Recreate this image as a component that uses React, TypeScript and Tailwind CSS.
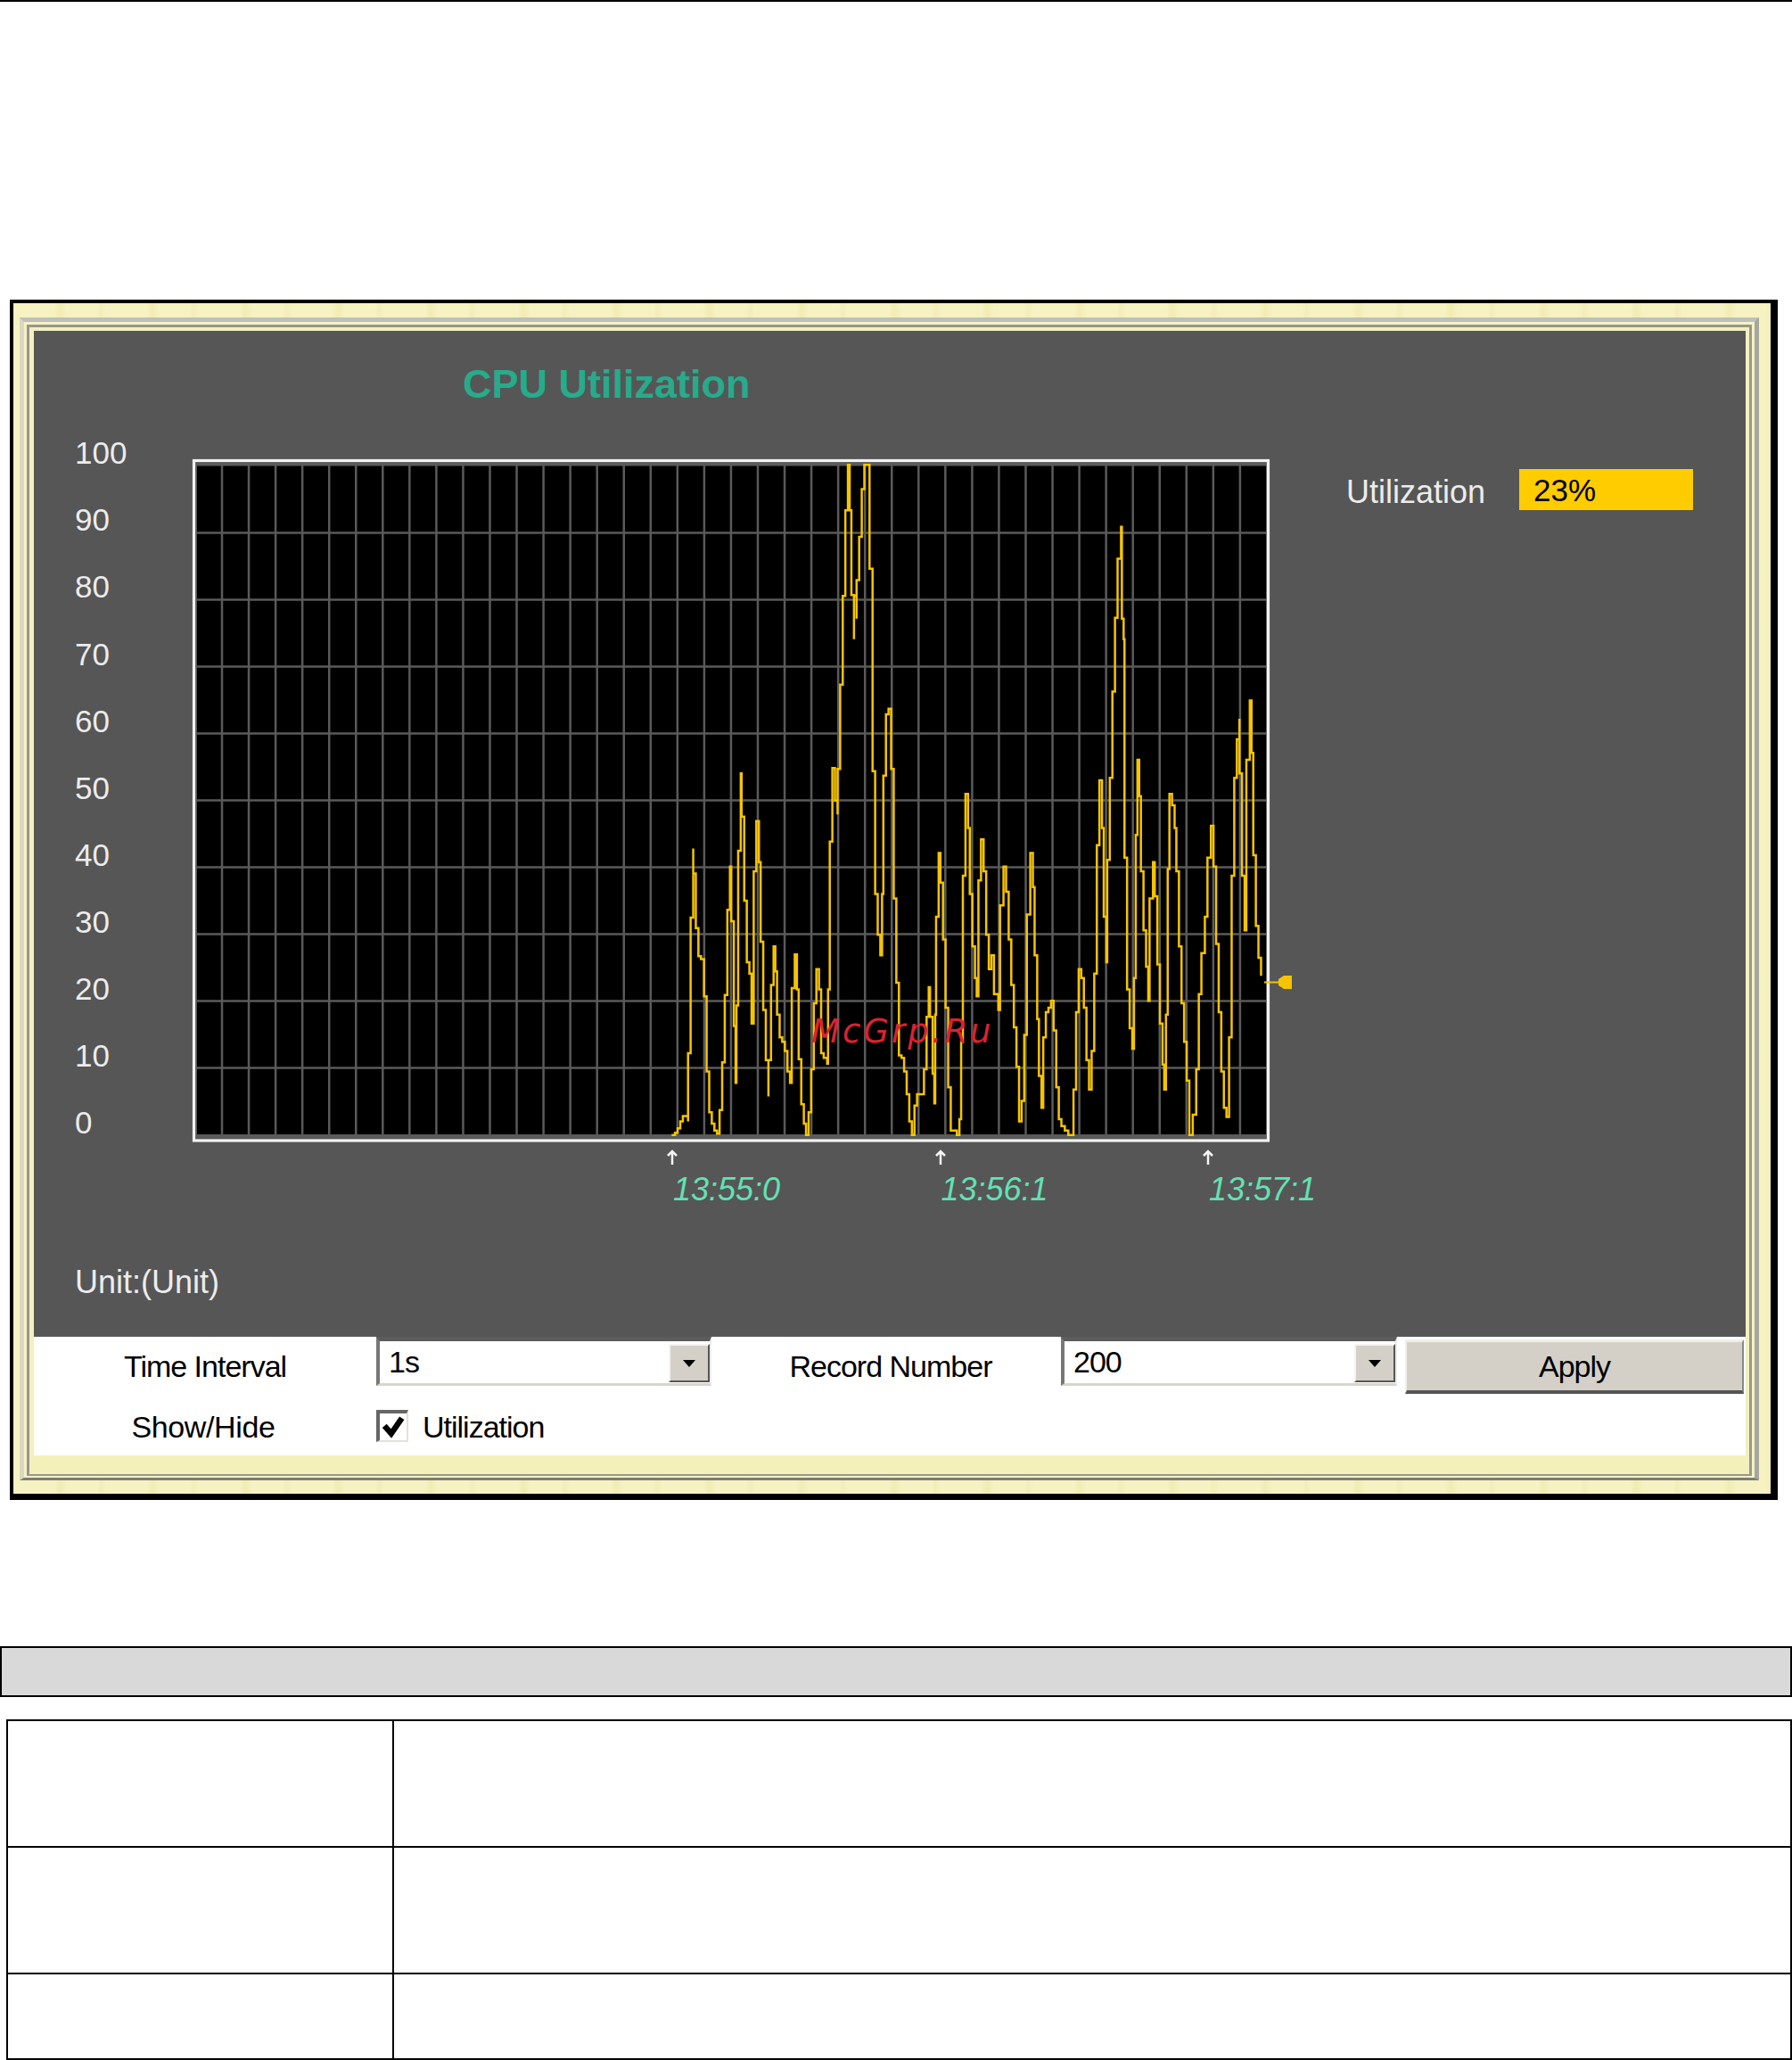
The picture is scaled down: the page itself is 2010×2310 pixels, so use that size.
const yLabels = ["100", "90", "80", "70", "60", "50", "40", "30", "20", "10", "0"];
const ticks = ["13:55:0", "13:56:1", "13:57:1"];

// x, y of each step of the trace, read off the chart
const trace = [
  [118,1550],[124,1540],[130,1525],[136,1513],[148,1525],[148,1375],[154,1077],[160,925],[160,980],[166,1100],[172,1162],[178,1168],[185,1250],[191,1415],[197,1505],[203,1530],[209,1545],[215,1552],[221,1500],[227,1395],[233,1247],[239,1060],[245,965],[248,1085],[254,1315],[258,1440],[260,1270],[264,930],[270,760],[272,855],[278,1040],[284,1175],[290,1200],[295,1310],[300,975],[306,865],[312,955],[316,1130],[322,1280],[328,1390],[334,1470],[334,1390],[340,1225],[346,1140],[350,1195],[354,1290],[360,1340],[366,1350],[372,1370],[378,1415],[384,1440],[388,1232],[395,1158],[400,1235],[404,1388],[410,1487],[416,1530],[421,1555],[427,1505],[433,1410],[439,1265],[445,1190],[451,1235],[456,1375],[462,1385],[470,1398],[472,1235],[476,910],[482,748],[488,820],[494,850],[494,750],[500,565],[506,370],[512,182],[518,82],[522,182],[526,368],[532,465],[532,370],[538,420],[538,335],[544,240],[550,135],[556,82],[568,82],[568,310],[575,755],[581,1025],[587,1115],[593,1160],[597,1025],[600,765],[606,630],[612,618],[618,750],[624,1035],[630,1220],[636,1380],[642,1385],[648,1415],[654,1465],[660,1525],[666,1555],[672,1490],[678,1465],[690,1465],[694,1410],[700,1295],[705,1230],[708,1295],[714,1420],[718,1485],[720,1290],[722,1075],[728,935],[732,1000],[738,1125],[744,1275],[750,1450],[756,1545],[762,1545],[770,1555],[776,1520],[780,1350],[784,985],[790,805],[796,880],[800,1025],[806,1140],[812,1210],[816,1250],[820,995],[826,905],[832,975],[838,1115],[844,1190],[850,1160],[856,1245],[866,1280],[870,1050],[878,965],[884,1020],[890,1125],[896,1225],[902,1318],[908,1405],[914,1525],[920,1480],[926,1335],[932,1070],[940,935],[946,1010],[950,1160],[956,1300],[960,1425],[966,1495],[970,1340],[976,1285],[982,1275],[988,1260],[994,1325],[1000,1450],[1006,1520],[1012,1535],[1020,1545],[1028,1555],[1040,1455],[1046,1285],[1052,1190],[1058,1210],[1064,1275],[1070,1390],[1076,1455],[1082,1370],[1088,1200],[1094,918],[1100,775],[1106,880],[1110,1075],[1116,1175],[1118,950],[1124,770],[1130,580],[1136,418],[1142,288],[1150,218],[1152,420],[1156,465],[1158,945],[1164,1235],[1170,1320],[1176,1365],[1180,1210],[1184,895],[1188,730],[1192,810],[1196,975],[1202,1105],[1208,1185],[1213,1260],[1216,1035],[1224,955],[1228,1030],[1234,1180],[1240,1310],[1246,1400],[1250,1455],[1254,1290],[1258,970],[1262,805],[1268,830],[1274,880],[1278,975],[1284,1140],[1290,1265],[1296,1350],[1302,1435],[1308,1555],[1316,1510],[1324,1410],[1330,1245],[1336,1155],[1344,1075],[1350,945],[1358,875],[1364,965],[1370,1135],[1376,1285],[1382,1415],[1388,1495],[1394,1515],[1400,1340],[1406,985],[1412,770],[1418,685],[1424,640],[1424,760],[1430,985],[1436,1105],[1440,730],[1448,600],[1452,715],[1456,940],[1462,1095],[1468,1165],[1474,1205],
];
const tracePath = "M110 1555" + trace.map(([x, y]) => `H${x}V${y}`).join("");

function Plot() {
  return (
    <svg width="1208" height="766" className="block overflow-visible">
      <rect x="1.5" y="1.5" width="1205" height="762.5" fill="#5a5a5a" stroke="#f2f2f2" strokeWidth="3.2" />
      <rect x="5" y="7.5" width="1199" height="749.5" fill="#000" />
      {Array.from({ length: 39 }, (_, i) => (
        <line key={i} x1={33 + i * 30.05} x2={33 + i * 30.05} y1="7" y2="758" stroke="#5a5a5a" strokeWidth="2.5" />
      ))}
      {Array.from({ length: 9 }, (_, i) => (
        <line key={i} x1="5" x2="1204" y1={82.5 + i * 75} y2={82.5 + i * 75} stroke="#5a5a5a" strokeWidth="2.5" />
      ))}
      <g transform="translate(484 -35.5) scale(0.4847 0.5102)">
        <path d={tracePath} fill="none" stroke="#f5c400" strokeWidth="2.5" vectorEffect="non-scaling-stroke" />
      </g>
      <path d="M1202 586.5H1218" stroke="#f5c400" strokeWidth="2" />
      <path d="M1218 583l6-4h9v15h-9l-6-4z" fill="#f5c400" />
    </svg>
  );
}

function ArrowTick() {
  return (
    <svg width="16" height="18" viewBox="0 0 16 18" className="block">
      <path d="M8 17V2M3 7l5-5 5 5" fill="none" stroke="#f4f4f4" strokeWidth="2.5" />
    </svg>
  );
}

function Select({ value, className }: { value: React.ReactNode; className: string }) {
  return (
    <div className={`flex h-[55px] border-t-[5px] border-r-2 border-b-[3px] border-l-[4px] border-t-[#5c5c5c] border-r-[#ececec] border-b-[#d8d5cc] border-l-[#777] bg-white ${className}`}>
      <div className="flex flex-1 items-center pl-[10px]">{value}</div>
      <div className="mt-[3px] flex h-[43px] w-[46px] items-center justify-center border-2 border-t-[#f4f4f4] border-r-[#555] border-b-[#555] border-l-[#f4f4f4] bg-[#d4d0c8]">
        <div className="h-0 w-0 border-x-[7px] border-t-[8px] border-x-transparent border-t-black" />
      </div>
    </div>
  );
}

export default function App() {
  return (
    <div className="relative h-[2310px] w-[2010px] overflow-hidden bg-white font-['Liberation_Sans',sans-serif]">
      <div className="h-[2px] bg-black" />

      <div className="mt-[334px] ml-[11px] w-[1983px] border-t-4 border-r-8 border-b-[7px] border-l-4 border-black bg-[#f6f2c2] bg-[repeating-linear-gradient(90deg,#f6f2c2_0px,#f6f2c2_46px,#f1ecb2_52px,#f6f2c2_60px,#f6f2c2_94px,#f2edb8_98px,#f6f2c2_104px)] pt-4 pr-[13px] pb-[15px] pl-[7px]">
        <div className="border-[5px] border-t-[#bfbfba] border-r-[#a6a6a0] border-b-[3px] border-b-[#7c7c78] border-l-[#d8d8c4]">
          <div className="border-[3px] border-b-2 border-[#f6f2c2]">
            <div className="border-[3px] border-b-2 border-[#97978f]">
              <div className="border-t-[4px] border-r-[4px] border-b-[21px] border-l-[5px] border-t-[#f3efc0] border-r-[#f3efc0] border-b-[#f4f0ba] border-l-[#f3efc0]">
                {/* dark chart panel */}
                <div className="flex h-[1128px] flex-col bg-[#565656] text-[#ececec]">
                  <div className="h-[84px] pt-[35px] pl-[481px] text-[45px] leading-[50px] font-bold text-[#27ab8b]">CPU Utilization</div>
                  <div className="flex items-start">
                    <div className="ml-[46px] w-[132px] shrink-0 pt-[16px] text-[35px]">
                      {yLabels.map((label) => (
                        <div key={label} className="flex h-[75.1px] items-center">{label}</div>
                      ))}
                    </div>
                    <div className="relative mt-[60px] w-[1208px] shrink-0">
                      <Plot />
                      <div className="absolute top-[620px] left-[694px] font-['DejaVu_Sans',sans-serif] text-[37px] leading-[44px] tracking-[3px] whitespace-nowrap text-[#dc2231] italic">McGrp.Ru</div>
                      <div className="ml-[530px] flex w-max pt-[8px] text-[36px] leading-[42px] text-[#62e2b4] italic">
                        {ticks.map((tick) => (
                          <div key={tick} className="w-[300.5px]">
                            <ArrowTick />
                            <div className="mt-[6px] ml-[9px] whitespace-nowrap">{tick}</div>
                          </div>
                        ))}
                      </div>
                    </div>
                    <div className="mt-[71px] ml-[86px] flex items-start">
                      <div className="w-[194px] pt-[3px] text-[36px] leading-[46px]">Utilization</div>
                      <div className="flex h-[46px] w-[195px] items-center bg-[#ffcc00] pt-[3px] pl-[16px] text-[35px] text-black">23%</div>
                    </div>
                  </div>
                  <div className="mt-[62px] pl-[46px] text-[36px] leading-[42px]">Unit:(Unit)</div>
                </div>

                {/* controls */}
                <div className="h-[133px] bg-white text-[34px] tracking-[-1px] text-black">
                  <div className="flex h-[66px] items-start">
                    <div className="flex h-[66px] w-[384px] items-center justify-center">Time Interval</div>
                    <Select value="1s" className="w-[376px]" />
                    <div className="flex h-[66px] w-[392px] items-center justify-center pl-[10px]">Record Number</div>
                    <Select value="200" className="w-[377px]" />
                    <button className="mt-[3px] ml-[9px] h-[61px] w-[380px] border-t-[3px] border-r-2 border-b-[4px] border-l-2 border-t-[#f0efe9] border-r-[#888] border-b-[#555] border-l-[#f0efe9] bg-[#d4d0c8] text-center">Apply</button>
                  </div>
                  <div className="mt-[16px] flex h-[36px] items-center">
                    <div className="w-[384px] pt-[2px] pr-[4px] text-center tracking-[-0.4px]">Show/Hide</div>
                    <div className="flex h-[36px] w-[36px] items-center justify-center border-t-4 border-r-2 border-b-2 border-l-4 border-t-[#666] border-r-[#e4e2da] border-b-[#e4e2da] border-l-[#666] bg-white">
                      <svg width="26" height="26" viewBox="0 0 24 24">
                        <path d="M3 11l7 8L21 3" fill="none" stroke="#000" strokeWidth="6" />
                      </svg>
                    </div>
                    <div className="ml-[16px] pt-[2px]">Utilization</div>
                  </div>
                </div>
              </div>
            </div>
          </div>
        </div>
      </div>

      <div className="mt-[164px] h-[57px] border-2 border-black bg-[#d9d9d9]" />

      <div className="mt-[25px] ml-[7px] h-[382px] w-[2003px] border-2 border-black">
        <div className="flex h-[142px] border-b-2 border-black">
          <div className="w-[433px] border-r-2 border-black" />
        </div>
        <div className="flex h-[142px] border-b-2 border-black">
          <div className="w-[433px] border-r-2 border-black" />
        </div>
        <div className="flex h-[94px]">
          <div className="w-[433px] border-r-2 border-black" />
        </div>
      </div>
    </div>
  );
}
